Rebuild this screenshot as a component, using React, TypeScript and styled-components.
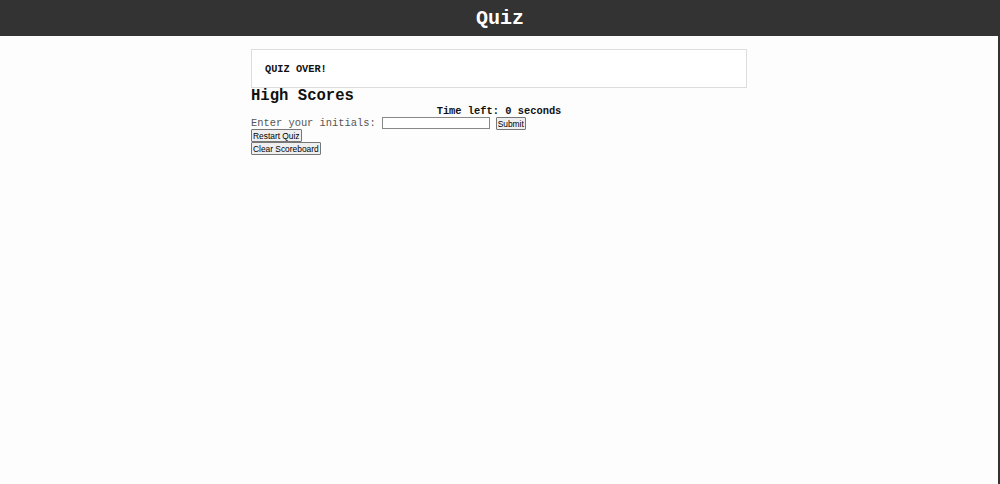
import React from "react";
import styled, { createGlobalStyle } from "styled-components";

const Global = createGlobalStyle`
  html, body { margin: 0; padding: 0; background: #fdfdfd; }
  body { font-family: "Liberation Mono", "Courier New", monospace; }
`;

const Page = styled.div`
  min-height: 484px;
  box-sizing: border-box;
  border-right: 2px solid #333;
  background: #fdfdfd;
`;

const Header = styled.header`
  height: 36px;
  background: #333;
  color: #fff;
  display: flex;
  align-items: center;
  justify-content: center;
  font-size: 20px;
  font-weight: bold;
  margin-right: -2px;
`;

const Main = styled.main`
  width: 496px;
  margin: 13px auto 0;
  display: flex;
  flex-direction: column;
`;

const Box = styled.div`
  height: 39px;
  box-sizing: border-box;
  border: 1px solid #ddd;
  background: #fff;
  display: flex;
  align-items: center;
  padding: 0 13px;
  font-size: 10.3px;
  font-weight: bold;
  color: #111;
`;

const Title = styled.h2`
  margin: 0;
  font-size: 15.6px;
  font-weight: bold;
  line-height: 17px;
  color: #111;
`;

const Timer = styled.div`
  text-align: center;
  font-size: 10.4px;
  font-weight: bold;
  line-height: 11px;
  padding-top: 1px;
  color: #111;
`;

const Row = styled.div`
  display: flex;
  align-items: center;
  height: 12px;
  font-size: 10.4px;
  color: #555;
`;

const Input = styled.input`
  width: 108px;
  height: 12px;
  box-sizing: border-box;
  border: 1px solid #888;
  margin: 0 6px 0 6px;
  padding: 0;
`;

const Button = styled.button`
  font-family: "Liberation Sans", Arial, sans-serif;
  font-size: 8.4px;
  line-height: 10px;
  height: 13px;
  padding: 0 1px;
  border: 1px solid #777;
  border-radius: 1px;
  background: #efefef;
  color: #000;
  align-self: flex-start;
`;

export default function App() {
  return (
    <>
      <Global />
      <Page>
        <Header>Quiz</Header>
        <Main>
          <Box>QUIZ OVER!</Box>
          <Title>High Scores</Title>
          <Timer>Time left: 0 seconds</Timer>
          <Row>
            Enter your initials: <Input />
            <Button>Submit</Button>
          </Row>
          <Button>Restart Quiz</Button>
          <Button>Clear Scoreboard</Button>
        </Main>
      </Page>
    </>
  );
}
